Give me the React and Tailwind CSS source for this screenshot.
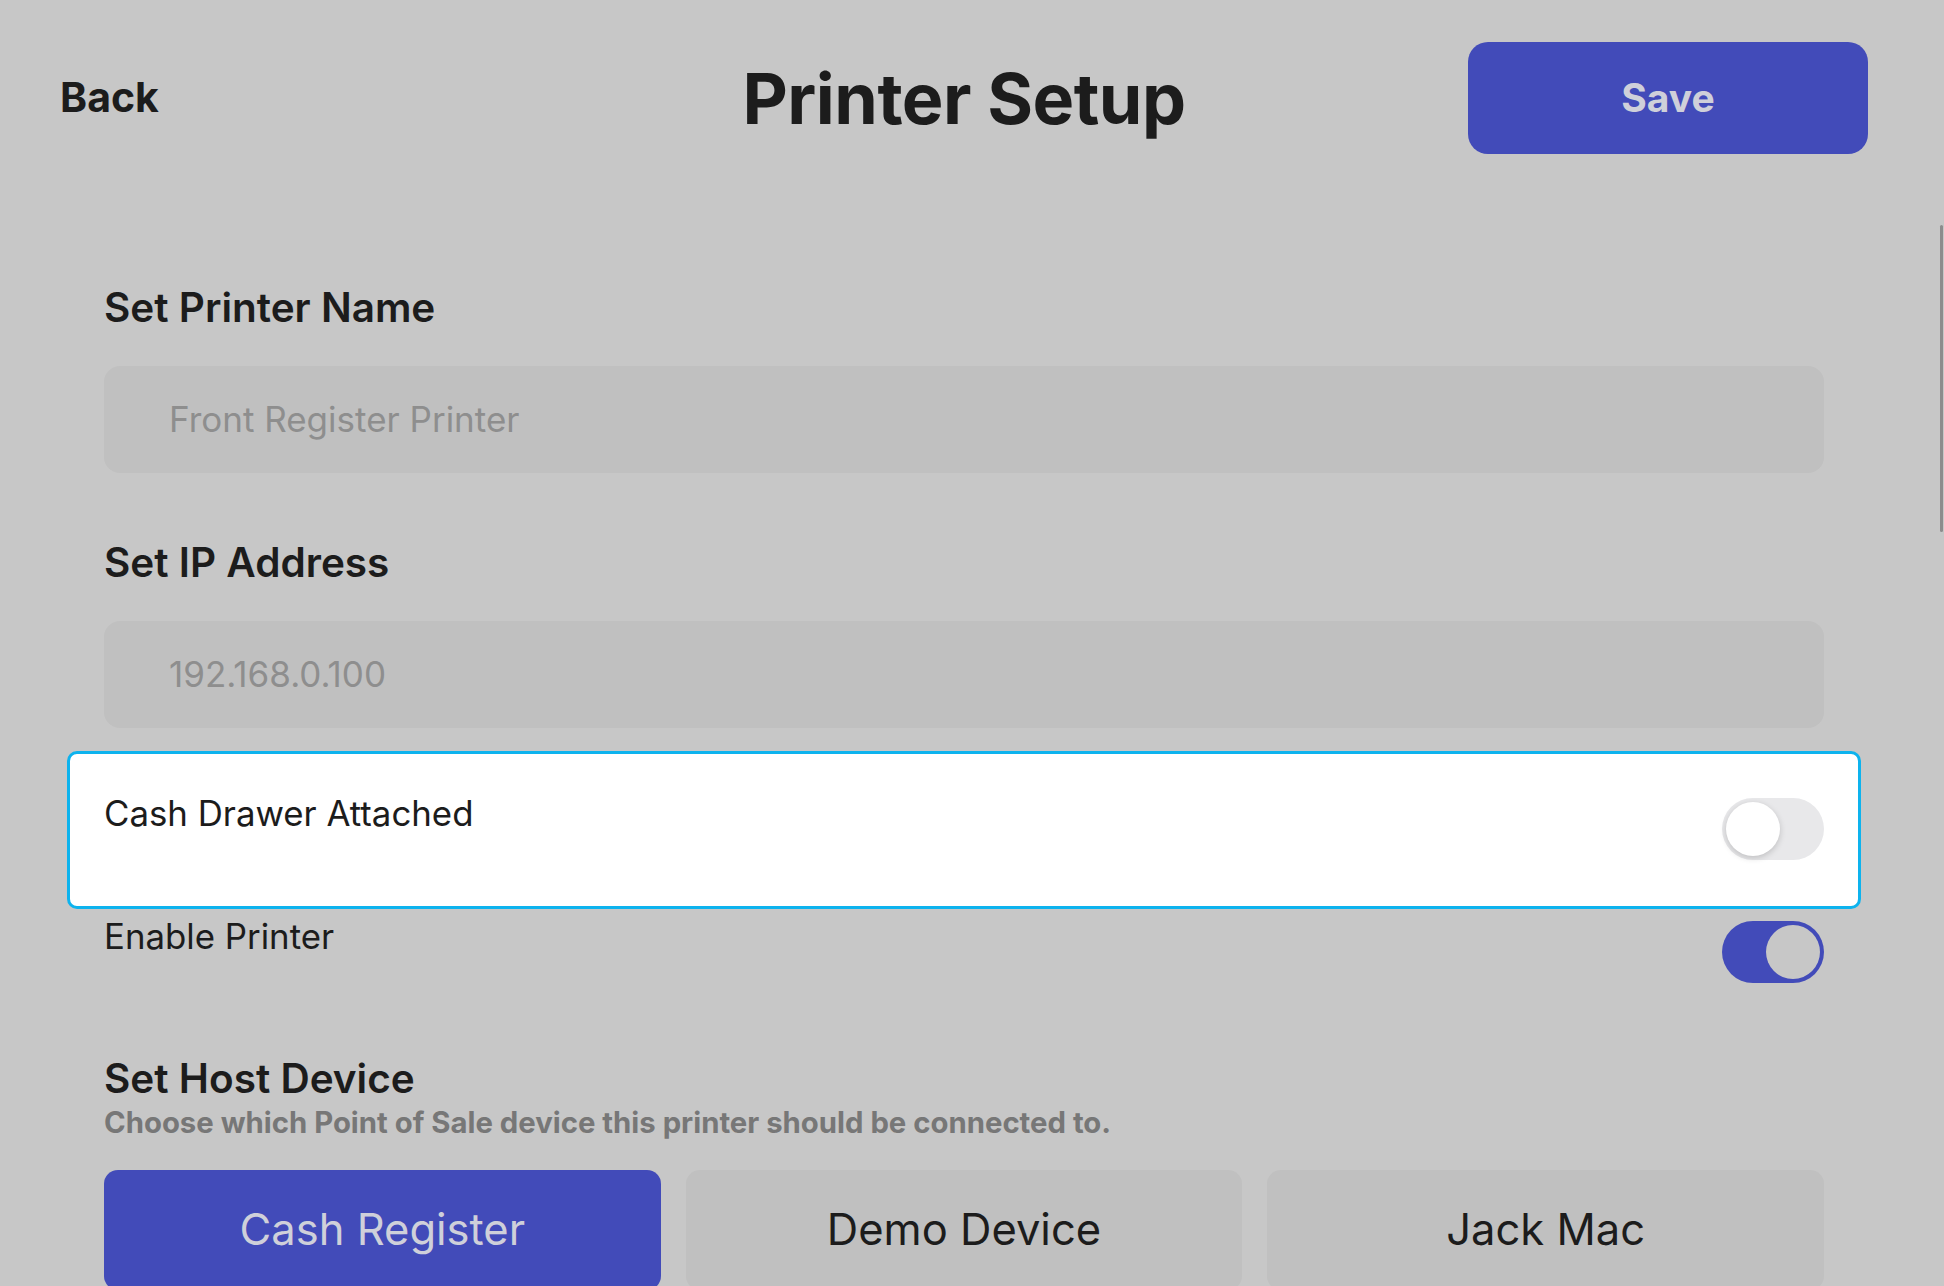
import React from 'react'

const font = { fontFamily: 'Inter, "Noto Sans", "Liberation Sans", sans-serif' }

const Toggle = ({ on }) => (
  <div
    className={`relative w-[102px] h-[62px] rounded-full shrink-0 ${
      on ? 'bg-[#424bb9]' : 'bg-[#e8e8ea]'
    }`}
  >
    <div
      className={`absolute top-[4px] w-[54px] h-[54px] rounded-full ${
        on ? 'right-[4px] bg-[#c7c7c7]' : 'left-[4px] bg-white shadow-[0_2px_6px_rgba(0,0,0,0.18)]'
      }`}
    />
  </div>
)

const SettingRow = ({ label, on, focused }) => (
  <div className="relative flex items-start justify-between h-[123px]">
    {focused && (
      <div className="absolute -top-[17px] -bottom-[18px] -left-[37px] -right-[37px] bg-white border-[3px] border-[#0db3ee] rounded-[10px]" />
    )}
    <span className="relative mt-[28px] text-[34.8px] leading-[34px] text-[#1c1c1c]">{label}</span>
    <div className="relative mt-[30px]">
      <Toggle on={on} />
    </div>
  </div>
)

const Label = ({ children, className = '' }) => (
  <h2 className={`text-[40.5px] leading-[42px] font-semibold text-[#1c1c1c] ${className}`}>{children}</h2>
)

const Field = ({ placeholder, className = '' }) => (
  <div className={`h-[107px] rounded-[16px] bg-[#c0c0c0] flex items-center pl-[65px] ${className}`}>
    <span className="text-[35px] text-[#8e8e8e]">{placeholder}</span>
  </div>
)

export default function App() {
  const devices = ['Cash Register', 'Demo Device', 'Jack Mac']

  return (
    <div className="relative w-full h-[1286px] overflow-hidden bg-[#c7c7c7]" style={font}>
      <div className="w-[1928px]">
        {/* Header */}
        <header className="grid grid-cols-[1fr_auto_1fr] items-center px-[60px] pt-[42px]">
          <button className="justify-self-start text-[41px] font-bold text-[#1c1c1c]">Back</button>
          <h1 className="text-[70px] font-bold text-[#1c1c1c] tracking-[-0.5px]">Printer Setup</h1>
          <button className="justify-self-end w-[400px] h-[112px] rounded-[20px] bg-[#424bb9] text-[39px] font-bold text-[#cfd0da]">
            Save
          </button>
        </header>

        {/* Form */}
        <main className="px-[104px]">
          <Label className="mt-[133px]">Set Printer Name</Label>
          <Field placeholder="Front Register Printer" className="mt-[37px]" />

          <Label className="mt-[69px]">Set IP Address</Label>
          <Field placeholder="192.168.0.100" className="mt-[37px]" />

          <div className="mt-[40px]">
            <SettingRow label="Cash Drawer Attached" on={false} focused />
            <SettingRow label="Enable Printer" on />
          </div>

          <Label className="mt-[44px]">Set Host Device</Label>
          <p className="mt-[8px] text-[29.3px] leading-[29px] font-bold text-[#777777]">
            Choose which Point of Sale device this printer should be connected to.
          </p>

          <div className="mt-[33px] grid grid-cols-3 gap-[25px]">
            {devices.map((d, i) => (
              <button
                key={d}
                className={`h-[120px] rounded-[14px] text-[43.5px] ${
                  i === 0 ? 'bg-[#424bb9] text-[#cfd0da]' : 'bg-[#c0c0c0] text-[#1c1c1c]'
                }`}
              >
                {d}
              </button>
            ))}
          </div>
        </main>
      </div>

      {/* scroll indicator */}
      <div className="absolute right-[1px] top-[225px] w-[3px] h-[307px] rounded-full bg-[#8c8c8c]" />
    </div>
  )
}
